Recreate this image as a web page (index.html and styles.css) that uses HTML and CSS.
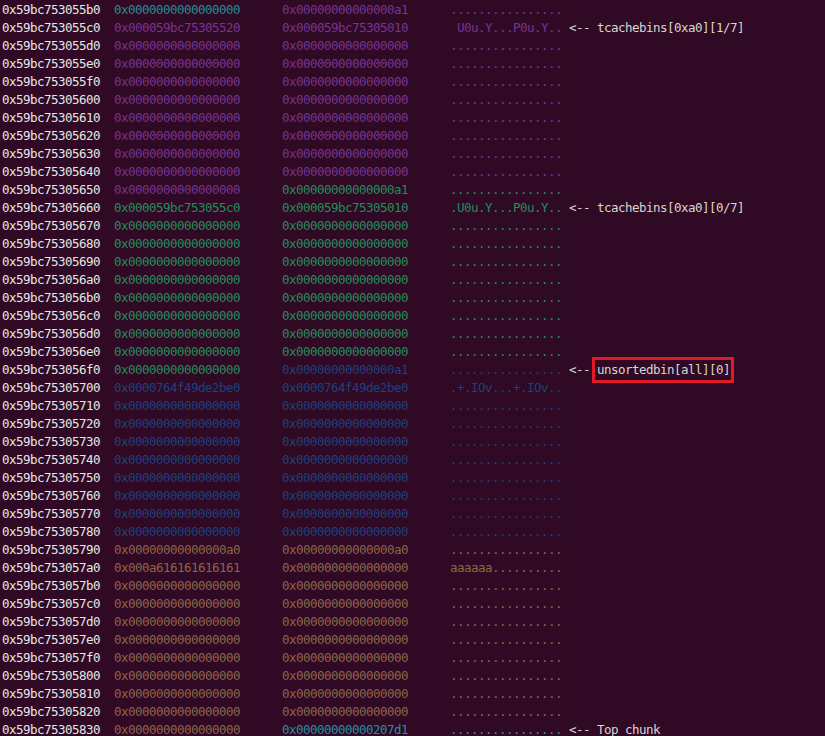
FILE: index.html
```html
<!DOCTYPE html>
<html lang="en">
<head>
<meta charset="utf-8">
<title>heap dump</title>
<link rel="stylesheet" href="styles.css">
</head>
<body>
<main class="dump">
<div class="row"><span class="addr">0x59bc753055b0</span><span class="c">0x0000000000000000</span><span class="m">0x00000000000000a1</span><span class="m">................</span></div>
<div class="row"><span class="addr">0x59bc753055c0</span><span class="m">0x000059bc75305520</span><span class="m">0x000059bc75305010</span><span class="m"> U0u.Y...P0u.Y..</span><span class="note">&lt;-- tcachebins[0xa0][1/7]</span></div>
<div class="row"><span class="addr">0x59bc753055d0</span><span class="m">0x0000000000000000</span><span class="m">0x0000000000000000</span><span class="m">................</span></div>
<div class="row"><span class="addr">0x59bc753055e0</span><span class="m">0x0000000000000000</span><span class="m">0x0000000000000000</span><span class="m">................</span></div>
<div class="row"><span class="addr">0x59bc753055f0</span><span class="m">0x0000000000000000</span><span class="m">0x0000000000000000</span><span class="m">................</span></div>
<div class="row"><span class="addr">0x59bc75305600</span><span class="m">0x0000000000000000</span><span class="m">0x0000000000000000</span><span class="m">................</span></div>
<div class="row"><span class="addr">0x59bc75305610</span><span class="m">0x0000000000000000</span><span class="m">0x0000000000000000</span><span class="m">................</span></div>
<div class="row"><span class="addr">0x59bc75305620</span><span class="m">0x0000000000000000</span><span class="m">0x0000000000000000</span><span class="m">................</span></div>
<div class="row"><span class="addr">0x59bc75305630</span><span class="m">0x0000000000000000</span><span class="m">0x0000000000000000</span><span class="m">................</span></div>
<div class="row"><span class="addr">0x59bc75305640</span><span class="m">0x0000000000000000</span><span class="m">0x0000000000000000</span><span class="m">................</span></div>
<div class="row"><span class="addr">0x59bc75305650</span><span class="m">0x0000000000000000</span><span class="g">0x00000000000000a1</span><span class="g">................</span></div>
<div class="row"><span class="addr">0x59bc75305660</span><span class="g">0x000059bc753055c0</span><span class="g">0x000059bc75305010</span><span class="g">.U0u.Y...P0u.Y..</span><span class="note">&lt;-- tcachebins[0xa0][0/7]</span></div>
<div class="row"><span class="addr">0x59bc75305670</span><span class="g">0x0000000000000000</span><span class="g">0x0000000000000000</span><span class="g">................</span></div>
<div class="row"><span class="addr">0x59bc75305680</span><span class="g">0x0000000000000000</span><span class="g">0x0000000000000000</span><span class="g">................</span></div>
<div class="row"><span class="addr">0x59bc75305690</span><span class="g">0x0000000000000000</span><span class="g">0x0000000000000000</span><span class="g">................</span></div>
<div class="row"><span class="addr">0x59bc753056a0</span><span class="g">0x0000000000000000</span><span class="g">0x0000000000000000</span><span class="g">................</span></div>
<div class="row"><span class="addr">0x59bc753056b0</span><span class="g">0x0000000000000000</span><span class="g">0x0000000000000000</span><span class="g">................</span></div>
<div class="row"><span class="addr">0x59bc753056c0</span><span class="g">0x0000000000000000</span><span class="g">0x0000000000000000</span><span class="g">................</span></div>
<div class="row"><span class="addr">0x59bc753056d0</span><span class="g">0x0000000000000000</span><span class="g">0x0000000000000000</span><span class="g">................</span></div>
<div class="row"><span class="addr">0x59bc753056e0</span><span class="g">0x0000000000000000</span><span class="g">0x0000000000000000</span><span class="g">................</span></div>
<div class="row"><span class="addr">0x59bc753056f0</span><span class="g">0x0000000000000000</span><span class="b">0x00000000000000a1</span><span class="b">................</span><span class="note">&lt;-- <span class="mark">unsortedbin[all][0]</span></span></div>
<div class="row"><span class="addr">0x59bc75305700</span><span class="b">0x0000764f49de2be0</span><span class="b">0x0000764f49de2be0</span><span class="b">.+.IOv...+.IOv..</span></div>
<div class="row"><span class="addr">0x59bc75305710</span><span class="b">0x0000000000000000</span><span class="b">0x0000000000000000</span><span class="b">................</span></div>
<div class="row"><span class="addr">0x59bc75305720</span><span class="b">0x0000000000000000</span><span class="b">0x0000000000000000</span><span class="b">................</span></div>
<div class="row"><span class="addr">0x59bc75305730</span><span class="b">0x0000000000000000</span><span class="b">0x0000000000000000</span><span class="b">................</span></div>
<div class="row"><span class="addr">0x59bc75305740</span><span class="b">0x0000000000000000</span><span class="b">0x0000000000000000</span><span class="b">................</span></div>
<div class="row"><span class="addr">0x59bc75305750</span><span class="b">0x0000000000000000</span><span class="b">0x0000000000000000</span><span class="b">................</span></div>
<div class="row"><span class="addr">0x59bc75305760</span><span class="b">0x0000000000000000</span><span class="b">0x0000000000000000</span><span class="b">................</span></div>
<div class="row"><span class="addr">0x59bc75305770</span><span class="b">0x0000000000000000</span><span class="b">0x0000000000000000</span><span class="b">................</span></div>
<div class="row"><span class="addr">0x59bc75305780</span><span class="b">0x0000000000000000</span><span class="b">0x0000000000000000</span><span class="b">................</span></div>
<div class="row"><span class="addr">0x59bc75305790</span><span class="y">0x00000000000000a0</span><span class="y">0x00000000000000a0</span><span class="y">................</span></div>
<div class="row"><span class="addr">0x59bc753057a0</span><span class="y">0x000a616161616161</span><span class="y">0x0000000000000000</span><span class="y">aaaaaa..........</span></div>
<div class="row"><span class="addr">0x59bc753057b0</span><span class="y">0x0000000000000000</span><span class="y">0x0000000000000000</span><span class="y">................</span></div>
<div class="row"><span class="addr">0x59bc753057c0</span><span class="y">0x0000000000000000</span><span class="y">0x0000000000000000</span><span class="y">................</span></div>
<div class="row"><span class="addr">0x59bc753057d0</span><span class="y">0x0000000000000000</span><span class="y">0x0000000000000000</span><span class="y">................</span></div>
<div class="row"><span class="addr">0x59bc753057e0</span><span class="y">0x0000000000000000</span><span class="y">0x0000000000000000</span><span class="y">................</span></div>
<div class="row"><span class="addr">0x59bc753057f0</span><span class="y">0x0000000000000000</span><span class="y">0x0000000000000000</span><span class="y">................</span></div>
<div class="row"><span class="addr">0x59bc75305800</span><span class="y">0x0000000000000000</span><span class="y">0x0000000000000000</span><span class="y">................</span></div>
<div class="row"><span class="addr">0x59bc75305810</span><span class="y">0x0000000000000000</span><span class="y">0x0000000000000000</span><span class="y">................</span></div>
<div class="row"><span class="addr">0x59bc75305820</span><span class="y">0x0000000000000000</span><span class="y">0x0000000000000000</span><span class="y">................</span></div>
<div class="row"><span class="addr">0x59bc75305830</span><span class="y">0x0000000000000000</span><span class="c2">0x00000000000207d1</span><span class="c2">................</span><span class="note">&lt;-- Top chunk</span></div>
</main>
</body>
</html>
```
FILE: styles.css
```css
html, body {
  margin: 0;
  height: 736px;
  overflow: hidden;
  background: #300a24;
}
.dump {
  padding: 1px 0 0 2px;
  font-family: "DejaVu Sans Mono", monospace;
  font-size: 12.5px;
  letter-spacing: -0.525px;
  line-height: 18px;
}
.row {
  display: grid;
  grid-template-columns: 112px 168px 168px 119px auto;
  height: 18px;
  white-space: pre;
}
.addr { color: #e8e6e3; }
.note { color: #d8d6d2; }
.m { color: #7a3392; }
.g { color: #1f8f5c; }
.b { color: #1a4180; }
.y { color: #8f6445; }
.c { color: #1f8f92; }
.c2 { color: #2290a4; }
.mark {
  display: inline-block;
  height: 18px;
  margin-left: -1px;
  padding-left: 1px;
  outline: 3px solid #e01b24;
  outline-offset: 1px;
}
```
